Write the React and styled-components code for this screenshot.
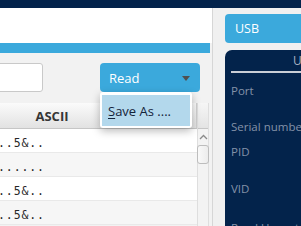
import React from "react";
import styled, { createGlobalStyle } from "styled-components";

const navy = "#03234b";
const blue = "#3ba9dc";

const GlobalStyle = createGlobalStyle`
  html, body {
    margin: 0;
    padding: 0;
    background: #f2f2f2;
  }
  * {
    box-sizing: border-box;
  }
`;

const Screen = styled.div`
  width: 301px;
  height: 226px;
  overflow: hidden;
  display: flex;
  flex-direction: column;
  background: #f2f2f2;
  font-family: "Open Sans", "Noto Sans", sans-serif;
`;

const TopBar = styled.div`
  height: 8px;
  flex-shrink: 0;
  background: ${navy};
`;

const Main = styled.div`
  flex: 1;
  display: flex;
  min-height: 0;
`;

// (Left pane)---------------------------------------------------------------

const LeftPane = styled.div`
  width: 212px;
  flex-shrink: 0;
  display: flex;
  flex-direction: column;
  background: #f2f2f2;
`;

const WhiteHead = styled.div`
  height: 35px;
  background: #ffffff;
`;

const BlueStrip = styled.div`
  height: 10px;
  margin-right: 2px;
  background: ${blue};
`;

const Toolbar = styled.div`
  height: 50px;
  display: flex;
  align-items: flex-start;
  padding-top: 10px;
`;

const AddressInput = styled.div`
  width: 60px;
  height: 29px;
  margin-left: -17px;
  background: #ffffff;
  border: 1px solid #c9c9c9;
  border-radius: 3px;
`;

const ReadWrap = styled.div`
  position: relative;
  margin-left: 57px;
`;

const ReadButton = styled.div`
  width: 100px;
  height: 29px;
  border-radius: 4px;
  background: ${blue};
  color: #ffffff;
  font-size: 13px;
  display: flex;
  align-items: center;
  justify-content: space-between;
  padding: 0 10px 0 9px;
`;

const Caret = styled.span`
  width: 0;
  height: 0;
  border-left: 4px solid transparent;
  border-right: 4px solid transparent;
  border-top: 5px solid #505050;
  margin-top: 1px;
`;

const Menu = styled.div`
  position: absolute;
  top: 100%;
  left: 0;
  width: 92px;
  padding: 3px 2px 2px;
  background: #ffffff;
  border-radius: 3px;
  box-shadow: 0 3px 9px rgba(0, 0, 0, 0.28);
  z-index: 10;
`;

const MenuItem = styled.div`
  height: 31px;
  display: flex;
  align-items: center;
  padding-left: 6px;
  background: ${props => (props.active ? "#b3d8ec" : "transparent")};
  color: #13233a;
  font-size: 13px;
  white-space: nowrap;
  u {
    text-decoration-thickness: 1px;
    text-underline-offset: 2px;
  }
`;

const TableArea = styled.div`
  flex: 1;
  display: flex;
  min-height: 0;
`;

const Table = styled.div`
  width: 197px;
  display: flex;
  flex-direction: column;
  overflow: hidden;
`;

const HeaderRow = styled.div`
  height: 26px;
  flex-shrink: 0;
  display: flex;
  background: linear-gradient(#fbfbfb, #e2e2e2);
  border-bottom: 1px solid #c6c6c6;
`;

const HeaderCell = styled.div`
  width: ${props => props.width || "auto"};
  flex: ${props => (props.width ? "none" : 1)};
  display: flex;
  align-items: center;
  justify-content: center;
  font-size: 13px;
  font-weight: bold;
  color: #363636;
  border-right: 1px solid #d0d0d0;
`;

const Row = styled.div`
  height: 24px;
  flex-shrink: 0;
  display: flex;
  align-items: center;
  padding-top: 4px;
  background: ${props => (props.odd ? "#f6f6f6" : "#ffffff")};
  border-bottom: 1px solid #e9e9e9;
`;

const AsciiText = styled.span`
  margin-left: -2px;
  font-family: "DejaVu Sans Mono", "Liberation Mono", monospace;
  font-size: 11.5px;
  letter-spacing: 0.9px;
  color: #262626;
`;

const Scrollbar = styled.div`
  width: 12px;
  display: flex;
  flex-direction: column;
  align-items: center;
  background: #f3f3f3;
  border-left: 1px solid #dedede;
  border-right: 1px solid #dedede;
`;

const ScrollCorner = styled.div`
  width: 100%;
  height: 26px;
  flex-shrink: 0;
  background: linear-gradient(#f6f6f6, #e4e4e4);
  border-bottom: 1px solid #c6c6c6;
`;

const ScrollArrow = styled.svg`
  margin-top: 5px;
`;

const Thumb = styled.div`
  width: 12px;
  height: 19px;
  margin-top: 5px;
  border: 1px solid #bdbdbd;
  border-radius: 3px;
  background: linear-gradient(90deg, #f9f9f9, #ececec);
`;

const Divider = styled.div`
  width: 1px;
  flex-shrink: 0;
  background: #d6d6d6;
`;

const Gutter = styled.div`
  width: 12px;
  flex-shrink: 0;
  background: #f0f0f0;
`;

// (Right pane)--------------------------------------------------------------

const RightPane = styled.div`
  width: 240px;
  flex-shrink: 0;
  display: flex;
  flex-direction: column;
  padding-top: 6px;
  background: #f0f0f0;
`;

const UsbButton = styled.div`
  height: 29px;
  flex-shrink: 0;
  border-radius: 4px;
  background: ${blue};
  color: #ffffff;
  font-size: 12.5px;
  display: flex;
  align-items: center;
  padding-left: 10px;
`;

const ConfigPanel = styled.div`
  flex: 1;
  margin-top: 7px;
  border-radius: 7px 7px 0 0;
  background: ${navy};
  padding-left: 6px;
  overflow: hidden;
`;

const PanelTitle = styled.div`
  height: 23px;
  padding-left: 62px;
  display: flex;
  align-items: flex-end;
  padding-bottom: 2px;
  font-size: 12px;
  color: #a7b2c2;
  white-space: nowrap;
  border-bottom: 2px solid #c9ced6;
`;

const FieldLabel = styled.div`
  height: 16px;
  line-height: 16px;
  margin-top: ${props => props.gap}px;
  font-size: 11.5px;
  color: #8392a8;
  white-space: nowrap;
`;

const rows = ["..5&..", "......", "..5&..", "..5&.."];

const labels = [
  { text: "Port", gap: 10 },
  { text: "Serial number", gap: 20 },
  { text: "PID", gap: 9 },
  { text: "VID", gap: 21 },
  { text: "Read Unprotect", gap: 23 }
];

export default function App() {
  return (
    <>
      <GlobalStyle />
      <Screen>
        <TopBar />
        <Main>
          <LeftPane>
            <WhiteHead />
            <BlueStrip />
            <Toolbar>
              <AddressInput />
              <ReadWrap>
                <ReadButton>
                  <span>Read</span>
                  <Caret />
                </ReadButton>
                <Menu>
                  <MenuItem active>
                    <span>
                      <u>S</u>ave As ....
                    </span>
                  </MenuItem>
                </Menu>
              </ReadWrap>
            </Toolbar>
            <TableArea>
              <Table>
                <HeaderRow>
                  <HeaderCell width="105px">ASCII</HeaderCell>
                  <HeaderCell />
                </HeaderRow>
                {rows.map((text, i) => (
                  <Row key={i} odd={i % 2 === 1}>
                    <AsciiText>{text}</AsciiText>
                  </Row>
                ))}
              </Table>
              <Scrollbar>
                <ScrollCorner />
                <ScrollArrow width="9" height="6" viewBox="0 0 9 6">
                  <polyline
                    points="1,5 4.5,1.5 8,5"
                    fill="none"
                    stroke="#8a8a8a"
                    strokeWidth="1.3"
                  />
                </ScrollArrow>
                <Thumb />
              </Scrollbar>
            </TableArea>
          </LeftPane>
          <Divider />
          <Gutter />
          <RightPane>
            <UsbButton>USB</UsbButton>
            <ConfigPanel>
              <PanelTitle>USB configuration</PanelTitle>
              {labels.map(l => (
                <FieldLabel key={l.text} gap={l.gap}>
                  {l.text}
                </FieldLabel>
              ))}
            </ConfigPanel>
          </RightPane>
        </Main>
      </Screen>
    </>
  );
}
